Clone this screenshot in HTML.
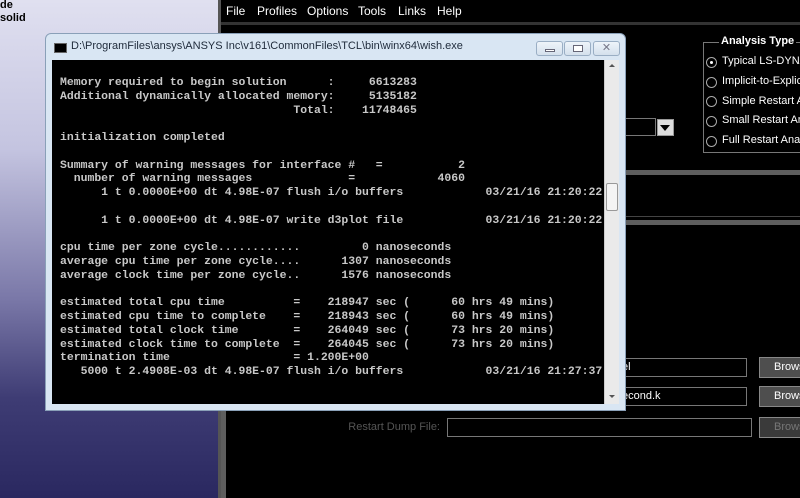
<!DOCTYPE html>
<html><head><style>
*{margin:0;padding:0;box-sizing:border-box}
body{width:800px;height:498px;overflow:hidden;position:relative;background:#000;font-family:"Liberation Sans",sans-serif}
.abs{position:absolute}
#left{left:0;top:0;width:218px;height:498px;background:linear-gradient(#e0e0f0 0%,#c4c4e0 30%,#7a78a8 60%,#3e3c74 80%,#2a2860 100%)}
#app{left:218px;top:0;width:582px;height:498px;background:#000;border-left:3px solid #555}
.menu{color:#fff;font-size:12px;top:4px}
.bar{background:#5e5e5e;left:222px;width:578px}
.radio{width:11px;height:11px;border:1px solid #aaa;border-radius:50%;left:706px}
.rl{color:#fff;font-size:11px;left:722px;white-space:nowrap}
.field{border:1px solid #777;background:#000;color:#fff;font-size:11px;padding:2px 3px;white-space:nowrap;overflow:hidden}
.btn{background:#4e4e4e;border:1px solid #888;color:#fff;font-size:11px;padding:3px 0 0 14px;left:759px;width:45px;height:21px}
#win{left:45px;top:33px;width:581px;height:378px;background:#d9e6f3;border:1px solid #8aa0b8;border-radius:6px 6px 0 0}
#con{left:52px;top:60px;width:552px;height:344px;background:#000;overflow:hidden}
pre{font-family:"Liberation Mono",monospace;font-size:11.45px;font-weight:bold;color:#c8c8c8;line-height:13.76px;position:absolute;left:8px;top:16px}
#sb{left:604px;top:60px;width:15px;height:344px;background:#eaeaea;border-left:1px solid #ccc}
.tb{top:7px;height:15px;border:1px solid #9aaec4;border-radius:3px;background:linear-gradient(#eef4fa,#d4e0ec)}
</style></head><body>
<div id="left" class="abs"></div>
<div class="abs" style="left:0;top:-1px;font-size:11px;font-weight:bold;color:#000;line-height:13px">de<br>solid</div>
<div id="app" class="abs"></div>
<div class="abs menu" style="left:226px">File</div>
<div class="abs menu" style="left:257px">Profiles</div>
<div class="abs menu" style="left:307px">Options</div>
<div class="abs menu" style="left:358px">Tools</div>
<div class="abs menu" style="left:398px">Links</div>
<div class="abs menu" style="left:437px">Help</div>
<div class="abs" style="left:221px;top:22px;width:579px;height:3px;background:#333"></div>
<div class="abs" style="left:703px;top:42px;width:100px;height:111px;border:1px solid #777"></div>
<div class="abs" style="left:719px;top:35px;background:#000;color:#fff;font-weight:bold;font-size:11px;padding:0 2px">Analysis Type</div>
<div class="abs radio" style="top:57px"></div><div class="abs" style="left:710px;top:61px;width:3px;height:3px;background:#fff;border-radius:50%"></div>
<div class="abs radio" style="top:77px"></div><div class="abs radio" style="top:96px"></div><div class="abs radio" style="top:116px"></div><div class="abs radio" style="top:136px"></div>
<div class="abs rl" style="top:55px">Typical LS-DYNA</div>
<div class="abs rl" style="top:75px">Implicit-to-Explicit</div>
<div class="abs rl" style="top:95px">Simple Restart Analysis</div>
<div class="abs rl" style="top:114px">Small Restart Analysis</div>
<div class="abs rl" style="top:134px">Full Restart Analysis</div>
<div class="abs" style="left:600px;top:118px;width:56px;height:18px;border:1px solid #777"></div>
<div class="abs" style="left:657px;top:119px;width:17px;height:17px;background:#ddd;border:1px solid #999"></div>
<div class="abs" style="left:660px;top:125px;width:0;height:0;border-left:5px solid transparent;border-right:5px solid transparent;border-top:6px solid #000"></div>
<div class="abs bar" style="top:170px;height:5px"></div>
<div class="abs bar" style="top:216px;height:1px;background:#444"></div>
<div class="abs bar" style="top:220px;height:5px"></div>
<div class="abs" style="left:221px;top:225px;width:5px;height:273px;background:#5e5e5e"></div>
<div class="abs field" style="left:600px;top:358px;width:147px;height:19px;padding-left:21px">el</div>
<div class="abs field" style="left:600px;top:387px;width:147px;height:19px;padding-left:21px">econd.k</div>
<div class="abs field" style="left:447px;top:418px;width:305px;height:19px"></div>
<div class="abs" style="left:300px;top:421px;width:140px;text-align:right;color:#555;font-size:11px">Restart Dump File:</div>
<div class="abs btn" style="top:357px">Brows</div>
<div class="abs btn" style="top:386px">Brows</div>
<div class="abs btn" style="top:417px;color:#777;background:#3a3a3a">Brows</div>
<div id="win" class="abs">
<div class="abs" style="left:8px;top:9px;width:13px;height:10px;background:#000;border:1px solid #666"></div>
<div class="abs" style="left:25px;top:6px;font-size:11px;color:#1e2a3a;white-space:nowrap">D:\ProgramFiles\ansys\ANSYS Inc\v161\CommonFiles\TCL\bin\winx64\wish.exe</div>
<div class="abs tb" style="left:490px;width:27px"><div class="abs" style="left:8px;top:7px;width:10px;height:3px;background:#fff;border:1px solid #667"></div></div>
<div class="abs tb" style="left:518px;width:27px"><div class="abs" style="left:8px;top:3px;width:10px;height:7px;border:1px solid #667;background:#fff"></div></div>
<div class="abs tb" style="left:547px;width:27px;text-align:center;font-size:11px;color:#778;line-height:13px">✕</div>
</div>
<div id="con" class="abs"><pre>Memory required to begin solution      :     6613283
Additional dynamically allocated memory:     5135182
                                  Total:    11748465

initialization completed

Summary of warning messages for interface #   =           2
  number of warning messages              =            4060
      1 t 0.0000E+00 dt 4.98E-07 flush i/o buffers            03/21/16 21:20:22

      1 t 0.0000E+00 dt 4.98E-07 write d3plot file            03/21/16 21:20:22

cpu time per zone cycle............         0 nanoseconds
average cpu time per zone cycle....      1307 nanoseconds
average clock time per zone cycle..      1576 nanoseconds

estimated total cpu time          =    218947 sec (      60 hrs 49 mins)
estimated cpu time to complete    =    218943 sec (      60 hrs 49 mins)
estimated total clock time        =    264049 sec (      73 hrs 20 mins)
estimated clock time to complete  =    264045 sec (      73 hrs 20 mins)
termination time                  = 1.200E+00
   5000 t 2.4908E-03 dt 4.98E-07 flush i/o buffers            03/21/16 21:27:37</pre></div>
<div id="sb" class="abs">
<div class="abs" style="left:4px;top:4px;border-left:3px solid transparent;border-right:3px solid transparent;border-bottom:3px solid #555"></div>
<div class="abs" style="left:1px;top:123px;width:12px;height:28px;background:#f4f4f4;border:1px solid #999;border-radius:2px"></div>
<div class="abs" style="left:4px;bottom:6px;border-left:3px solid transparent;border-right:3px solid transparent;border-top:3px solid #555"></div>
</div>
</body></html>
